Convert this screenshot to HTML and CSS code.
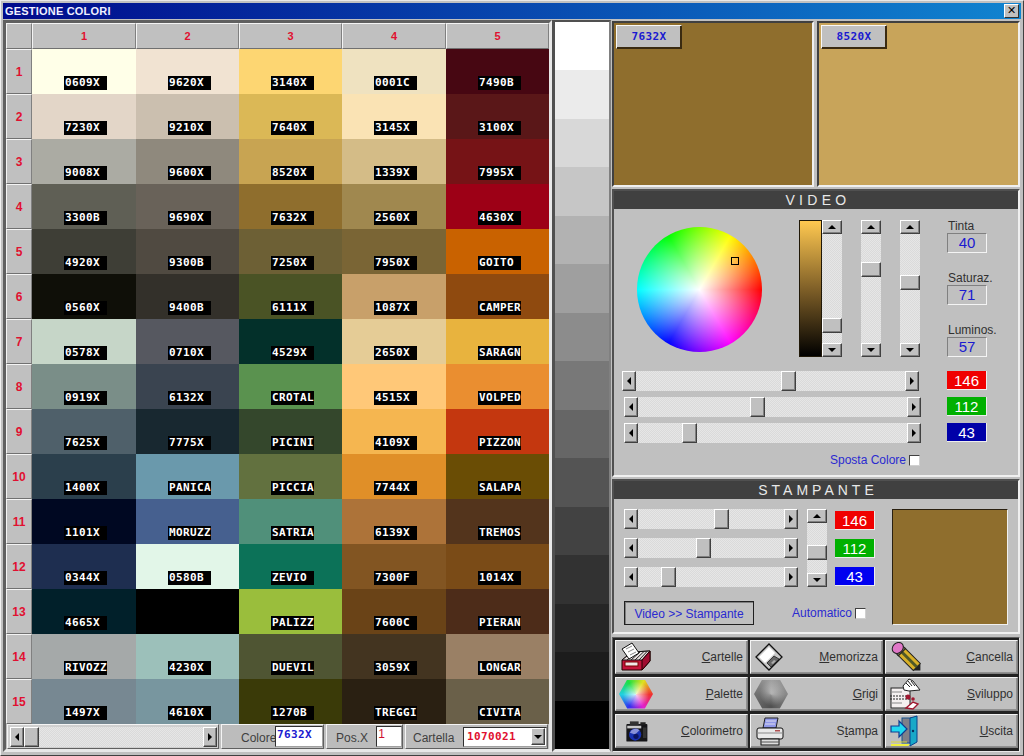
FILE: index.html
```html
<!DOCTYPE html>
<html lang="it">
<head>
<meta charset="utf-8">
<title>Gestione Colori</title>
<link rel="stylesheet" href="styles.css">
</head>
<body>
<div class="window">
  <div class="titlebar"><span class="title-text">GESTIONE COLORI</span><span class="close">✕</span></div>
  <div class="main">
    <section class="left">
      <div class="table">
        <div class="hd"></div><div class="hd">1</div><div class="hd">2</div><div class="hd">3</div><div class="hd">4</div><div class="hd">5</div>
        <div class="rh">1</div>
        <div class="cell" style="background:#FFFFE8"><b>0609X</b></div><div class="cell" style="background:#F1E3D2"><b>9620X</b></div><div class="cell" style="background:#FDD672"><b>3140X</b></div><div class="cell" style="background:#EFE2C0"><b>0001C</b></div><div class="cell" style="background:#470712"><b>7490B</b></div>
        <div class="rh">2</div>
        <div class="cell" style="background:#E3D6C8"><b>7230X</b></div><div class="cell" style="background:#CBBFAF"><b>9210X</b></div><div class="cell" style="background:#DBB856"><b>7640X</b></div><div class="cell" style="background:#FAE3B4"><b>3145X</b></div><div class="cell" style="background:#5A1718"><b>3100X</b></div>
        <div class="rh">3</div>
        <div class="cell" style="background:#ABABA3"><b>9008X</b></div><div class="cell" style="background:#8F897D"><b>9600X</b></div><div class="cell" style="background:#C8A452"><b>8520X</b></div><div class="cell" style="background:#D4BC87"><b>1339X</b></div><div class="cell" style="background:#761316"><b>7995X</b></div>
        <div class="rh">4</div>
        <div class="cell" style="background:#5F5F55"><b>3300B</b></div><div class="cell" style="background:#696259"><b>9690X</b></div><div class="cell" style="background:#8F6E2D"><b>7632X</b></div><div class="cell" style="background:#A0884F"><b>2560X</b></div><div class="cell" style="background:#9D0016"><b>4630X</b></div>
        <div class="rh">5</div>
        <div class="cell" style="background:#3E3E36"><b>4920X</b></div><div class="cell" style="background:#504A41"><b>9300B</b></div><div class="cell" style="background:#6D6035"><b>7250X</b></div><div class="cell" style="background:#7A6535"><b>7950X</b></div><div class="cell" style="background:#C96200"><b>GOITO</b></div>
        <div class="rh">6</div>
        <div class="cell" style="background:#0F0F08"><b>0560X</b></div><div class="cell" style="background:#33302A"><b>9400B</b></div><div class="cell" style="background:#4A5325"><b>6111X</b></div><div class="cell" style="background:#C8A06A"><b>1087X</b></div><div class="cell" style="background:#8F4A0F"><b>CAMPER</b></div>
        <div class="rh">7</div>
        <div class="cell" style="background:#C6D6C8"><b>0578X</b></div><div class="cell" style="background:#565860"><b>0710X</b></div><div class="cell" style="background:#03302A"><b>4529X</b></div><div class="cell" style="background:#E5CC96"><b>2650X</b></div><div class="cell" style="background:#E8B33E"><b>SARAGN</b></div>
        <div class="rh">8</div>
        <div class="cell" style="background:#7A8E88"><b>0919X</b></div><div class="cell" style="background:#3A4450"><b>6132X</b></div><div class="cell" style="background:#5A924F"><b>CROTAL</b></div><div class="cell" style="background:#FFC878"><b>4515X</b></div><div class="cell" style="background:#EA8E30"><b>VOLPED</b></div>
        <div class="rh">9</div>
        <div class="cell" style="background:#4F606A"><b>7625X</b></div><div class="cell" style="background:#182830"><b>7775X</b></div><div class="cell" style="background:#34472C"><b>PICINI</b></div><div class="cell" style="background:#F5B650"><b>4109X</b></div><div class="cell" style="background:#C4370F"><b>PIZZON</b></div>
        <div class="rh">10</div>
        <div class="cell" style="background:#2B3F4C"><b>1400X</b></div><div class="cell" style="background:#6A99AC"><b>PANICA</b></div><div class="cell" style="background:#62713F"><b>PICCIA</b></div><div class="cell" style="background:#E08F28"><b>7744X</b></div><div class="cell" style="background:#6A4D05"><b>SALAPA</b></div>
        <div class="rh">11</div>
        <div class="cell" style="background:#000822"><b>1101X</b></div><div class="cell" style="background:#46608F"><b>MORUZZ</b></div><div class="cell" style="background:#50907A"><b>SATRIA</b></div><div class="cell" style="background:#AD7339"><b>6139X</b></div><div class="cell" style="background:#53341C"><b>TREMOS</b></div>
        <div class="rh">12</div>
        <div class="cell" style="background:#1E2E50"><b>0344X</b></div><div class="cell" style="background:#E2F6E8"><b>0580B</b></div><div class="cell" style="background:#0C7258"><b>ZEVIO</b></div><div class="cell" style="background:#825522"><b>7300F</b></div><div class="cell" style="background:#7A4B17"><b>1014X</b></div>
        <div class="rh">13</div>
        <div class="cell" style="background:#01202A"><b>4665X</b></div><div class="cell" style="background:#000000"></div><div class="cell" style="background:#9ABE3C"><b>PALIZZ</b></div><div class="cell" style="background:#6A4317"><b>7600C</b></div><div class="cell" style="background:#4D2C19"><b>PIERAN</b></div>
        <div class="rh">14</div>
        <div class="cell" style="background:#A5A9A9"><b>RIVOZZ</b></div><div class="cell" style="background:#9CC0BA"><b>4230X</b></div><div class="cell" style="background:#4F5533"><b>DUEVIL</b></div><div class="cell" style="background:#433420"><b>3059X</b></div><div class="cell" style="background:#9A8065"><b>LONGAR</b></div>
        <div class="rh">15</div>
        <div class="cell" style="background:#778892"><b>1497X</b></div><div class="cell" style="background:#78969F"><b>4610X</b></div><div class="cell" style="background:#3A3A08"><b>1270B</b></div><div class="cell" style="background:#2A2012"><b>TREGGI</b></div><div class="cell" style="background:#6A6049"><b>CIVITA</b></div>
      </div>
      <div class="status">
        <div class="stat stat-scroll">
          <div class="hs hs-main"><span class="sb-btn"><i class="ar ar-l"></i></span><span class="track"><span class="thumb-h" style="left:0"></span></span><span class="sb-btn"><i class="ar ar-r"></i></span></div>
        </div>
        <div class="stat stat-colore"><span class="stat-label">Colore</span><span class="field field-blue">7632X</span></div>
        <div class="stat stat-pos"><span class="stat-label">Pos.X</span><span class="field field-pos">1</span></div>
        <div class="stat stat-cart"><span class="stat-label">Cartella</span><span class="combo"><span class="combo-val">1070021</span><span class="sb-btn combo-btn"><i class="ar ar-d"></i></span></span></div>
      </div>
    </section>

    <section class="strip">
      <div style="background:#ffffff"></div><div style="background:#ebebeb"></div><div style="background:#d8d8d8"></div><div style="background:#c6c6c6"></div><div style="background:#b2b2b2"></div><div style="background:#9f9f9f"></div><div style="background:#8c8c8c"></div><div style="background:#787878"></div><div style="background:#666666"></div><div style="background:#545454"></div><div style="background:#424242"></div><div style="background:#323232"></div><div style="background:#262626"></div><div style="background:#1c1c1c"></div><div style="background:#000000"></div>
    </section>

    <section class="right">
      <div class="swatches">
        <div class="swatch swatch-a"><span class="swatch-btn">7632X</span></div>
        <div class="swatch swatch-b"><span class="swatch-btn">8520X</span></div>
      </div>

      <div class="panel panel-video">
        <h2 class="panel-title">VIDEO</h2>
        <div class="video-top">
          <div class="wheel"><span class="marker"></span></div>
          <div class="ramp"></div>
          <div class="vs"><span class="sb-btn sb-v"><i class="ar ar-u"></i></span><span class="track-v"><span class="thumb-v" style="top:84px"></span></span><span class="sb-btn sb-v"><i class="ar ar-d"></i></span></div>
          <div class="vs vs-gap"><span class="sb-btn sb-v"><i class="ar ar-u"></i></span><span class="track-v"><span class="thumb-v" style="top:28px"></span></span><span class="sb-btn sb-v"><i class="ar ar-d"></i></span></div>
          <div class="vs vs-gap"><span class="sb-btn sb-v"><i class="ar ar-u"></i></span><span class="track-v"><span class="thumb-v" style="top:41px"></span></span><span class="sb-btn sb-v"><i class="ar ar-d"></i></span></div>
          <div class="hsl">
            <div class="hsl-item"><span class="hsl-label">Tinta</span><span class="hsl-val">40</span></div>
            <div class="hsl-item"><span class="hsl-label">Saturaz.</span><span class="hsl-val">71</span></div>
            <div class="hsl-item"><span class="hsl-label">Luminos.</span><span class="hsl-val">57</span></div>
          </div>
        </div>
        <div class="rgb-rows">
          <div class="rgb-row"><div class="hs hs-video hs-shift"><span class="sb-btn"><i class="ar ar-l"></i></span><span class="track"><span class="thumb-h" style="left:145px"></span></span><span class="sb-btn"><i class="ar ar-r"></i></span></div><span class="num num-r">146</span></div>
          <div class="rgb-row"><div class="hs hs-video"><span class="sb-btn"><i class="ar ar-l"></i></span><span class="track"><span class="thumb-h" style="left:112px"></span></span><span class="sb-btn"><i class="ar ar-r"></i></span></div><span class="num num-g">112</span></div>
          <div class="rgb-row"><div class="hs hs-video"><span class="sb-btn"><i class="ar ar-l"></i></span><span class="track"><span class="thumb-h" style="left:44px"></span></span><span class="sb-btn"><i class="ar ar-r"></i></span></div><span class="num num-b">43</span></div>
        </div>
        <div class="sposta"><span class="blue-label">Sposta Colore</span><span class="check"></span></div>
      </div>

      <div class="panel panel-print">
        <h2 class="panel-title">STAMPANTE</h2>
        <div class="print-body">
          <div class="print-controls">
            <div class="print-sliders">
              <div class="print-hs">
                <div class="hs hs-print"><span class="sb-btn"><i class="ar ar-l"></i></span><span class="track"><span class="thumb-h" style="left:76px"></span></span><span class="sb-btn"><i class="ar ar-r"></i></span></div>
                <div class="hs hs-print"><span class="sb-btn"><i class="ar ar-l"></i></span><span class="track"><span class="thumb-h" style="left:58px"></span></span><span class="sb-btn"><i class="ar ar-r"></i></span></div>
                <div class="hs hs-print"><span class="sb-btn"><i class="ar ar-l"></i></span><span class="track"><span class="thumb-h" style="left:23px"></span></span><span class="sb-btn"><i class="ar ar-r"></i></span></div>
              </div>
              <div class="vs vs-print"><span class="sb-btn sb-v"><i class="ar ar-u"></i></span><span class="track-v"><span class="thumb-v" style="top:22px"></span></span><span class="sb-btn sb-v"><i class="ar ar-d"></i></span></div>
              <div class="print-nums">
                <span class="num num-r">146</span>
                <span class="num num-g">112</span>
                <span class="num num-bb">43</span>
              </div>
            </div>
            <div class="print-actions">
              <span class="vs-btn">Video &gt;&gt; Stampante</span>
              <span class="auto"><span class="blue-label">Automatico</span><span class="check"></span></span>
            </div>
          </div>
          <div class="print-preview"></div>
        </div>
      </div>

      <div class="tools">
        <div class="tool">
          <svg class="ico" viewBox="0 0 32 32"><path d="M3 19 L13 11 L31 10 L31 20 L23 29 L3 29 Z" fill="#c4143c" stroke="#200" stroke-width="1"/><path d="M3 19 L23 19 L31 10 L13 11 Z" fill="#e8e0e0" stroke="#111" stroke-width="1"/><path d="M8 19 L17 11 M12 19 L21 11 M16 19 L25 10.500 M20 19 L28 10.500" stroke="#222" stroke-width="1"/><path d="M23 19 L31 10 L31 20 L23 29 Z" fill="#a00c30" stroke="#200"/><rect x="6" y="21" width="13" height="4" fill="#f0e8e8" stroke="#700"/><path d="M3 8 L13 2 L20 12 L10 18 Z" fill="#fff" stroke="#111"/><path d="M7 8 L13 5 M9 11 L15 8 M11 14 L17 11" stroke="#888"/></svg>
          <span class="tool-label"><u>C</u>artelle</span>
        </div>
        <div class="tool">
          <svg class="ico" viewBox="0 0 32 32"><path d="M2 16 L15 3 L28 16 L15 29 Z" fill="#c8c8c8" stroke="#111" stroke-width="1.3"/><path d="M5 16 L15 6 L21 12 L11 22 Z" fill="#fff"/><path d="M13 22 L20 15 L25 18 L17 26 Z" fill="#666" stroke="#222" stroke-width=".8"/><path d="M17 22 L20 19 L22 20 L19 23 Z" fill="#aaa"/></svg>
          <span class="tool-label"><u>M</u>emorizza</span>
        </div>
        <div class="tool">
          <svg class="ico ico-erase" viewBox="0 0 30 30"><g transform="translate(3 5) rotate(45 8 8)"><rect x="5" y="1" width="22" height="10" fill="#d8b028" stroke="#222"/><rect x="5" y="4.500" width="22" height="3" fill="#505828"/><rect x="1" y="1" width="5" height="10" fill="#787850" stroke="#222"/><ellipse cx="0" cy="6" rx="5" ry="6" fill="#e078c8" stroke="#222"/><path d="M27 1 L32 6 L27 11 Z" fill="#222"/></g></svg>
          <span class="tool-label"><u>C</u>ancella</span>
        </div>
        <div class="tool">
          <div class="hex hex-color"></div>
          <span class="tool-label"><u>P</u>alette</span>
        </div>
        <div class="tool">
          <div class="hex hex-grey"></div>
          <span class="tool-label"><u>G</u>rigi</span>
        </div>
        <div class="tool">
          <svg class="ico ico-dev" viewBox="0 0 32 32"><rect x="2" y="10" width="19" height="20" fill="#f4f0f0" stroke="#222"/><path d="M1 18 H22 M1 21 H22" stroke="#222" stroke-width="1" stroke-dasharray="2 1"/><circle cx="19" cy="19" r="2.500" fill="#a01830"/><circle cx="24" cy="21" r="1.800" fill="#a01830"/><path d="M14 8 L20 1 L24 3 L31 12 L20 13 L15 12 Z" fill="#fff" stroke="#222"/><path d="M17 5 L21 9 M19 3 L23 8 M22 3 L26 8" stroke="#222"/><path d="M17 30 L24 24 L29 26 L24 31 Z" fill="#fff" stroke="#a01830" stroke-width="1.400"/><path d="M3 14 H13 M3 25 H13" stroke="#888"/></svg>
          <span class="tool-label"><u>S</u>viluppo</span>
        </div>
        <div class="tool">
          <svg class="ico ico-cam" viewBox="0 0 32 32"><rect x="5" y="8" width="24" height="20" rx="1" fill="#151518"/><rect x="9" y="5" width="10" height="4" fill="#333"/><rect x="21" y="6" width="6" height="3" fill="#222"/><rect x="6" y="10" width="16" height="3" fill="#c8c8c8"/><circle cx="15" cy="20" r="7" fill="#1830b0"/><path d="M9 18 A7 7 0 0 1 20 15 L15 20 Z" fill="#8890d8"/><circle cx="16" cy="22" r="3" fill="#0c1460"/><rect x="24" y="12" width="4" height="12" fill="#333"/></svg>
          <span class="tool-label"><u>C</u>olorimetro</span>
        </div>
        <div class="tool">
          <svg class="ico" viewBox="0 0 32 32"><path d="M11 3 L24 3 L22 13 L9 13 Z" fill="#9098e8" stroke="#222"/><path d="M12 6 H22 M11 9 H21" stroke="#dde"/><rect x="3" y="13" width="26" height="11" rx="2" fill="#e8e8e8" stroke="#111"/><path d="M3 18 H29" stroke="#888"/><rect x="21" y="15" width="5" height="1.500" fill="#b05050"/><rect x="7" y="24" width="18" height="6" fill="#ddd" stroke="#111"/><path d="M7 27 H25" stroke="#555"/></svg>
          <span class="tool-label">S<u>t</u>ampa</span>
        </div>
        <div class="tool">
          <svg class="ico" viewBox="0 0 32 32"><rect x="13" y="3" width="11" height="25" fill="#808088" stroke="#14508c"/><path d="M21 3 L28 1 L28 27 L21 31 Z" fill="#18a8c8" stroke="#08408c" stroke-width="1"/><circle cx="24" cy="16" r="1.200" fill="#083060"/><path d="M2 11 H10 V6 L18 14 L10 22 V17 H2 Z" fill="#20d8f0" stroke="#103c90" stroke-width="1.200"/><path d="M2 29 H21 L19 31 H2 Z" fill="#f0f040"/><path d="M2 27 H18" stroke="#d8d840" stroke-width="1"/></svg>
          <span class="tool-label"><u>U</u>scita</span>
        </div>
      </div>
    </section>
  </div>
</div>
</body>
</html>
```

FILE: styles.css
```css
* { box-sizing: border-box; }
html, body { margin: 0; padding: 0; }
body {
  width: 1024px;
  height: 756px;
  overflow: hidden;
  background: #c0c0c0;
  font: 12px "Liberation Sans", Arial, sans-serif;
  color: #303030;
}
.window {
  width: 1024px;
  height: 756px;
  background: #c0c0c0;
  border-top: 1px solid #e8e8e8;
  border-left: 1px solid #f0f0f0;
  border-bottom: 1px solid #404040;
  border-right: 1px solid #404040;
  padding: 2px 2px 0 2px;
}
.titlebar {
  height: 16px;
  background: linear-gradient(90deg, #000a8c 0%, #1084d0 100%);
  display: flex;
  align-items: center;
  justify-content: space-between;
  padding: 0 0 0 2px;
}
.title-text {
  color: #f0f0ff;
  font: bold 11px "Liberation Sans", sans-serif;
  letter-spacing: 0.2px;
}
.close {
  width: 15px;
  height: 14px;
  margin-right: 2px;
  background: #c0c0c0;
  border: 1px solid;
  border-color: #fff #303030 #303030 #fff;
  color: #000;
  font: bold 11px/12px "DejaVu Sans", sans-serif;
  text-align: center;
}
.main { display: flex; margin-top: 1px; height: 732px; }

/* left table */
.left {
  width: 549px;
  height: 732px;
  border: 3px solid;
  border-color: #606060 #e8e8e8 #e8e8e8 #606060;
}
.table {
  display: grid;
  grid-template-columns: 26px 104px 103px 103px 104px 103px;
  grid-template-rows: 26px repeat(15, 45px);
}
.hd, .rh {
  background: #c0c0c0;
  border: 1px solid;
  border-color: #f4f4f4 #808080 #707070 #f4f4f4;
  color: #e01030;
  font: bold 11px "Liberation Sans", sans-serif;
  display: flex;
  align-items: center;
  justify-content: center;
}
.rh { font-size: 12px; }
.cell {
  display: flex;
  align-items: flex-end;
  padding: 0 0 4px 32px;
}
.cell b {
  display: block;
  width: 43px;
  height: 14px;
  padding-left: 1px;
  background: #000;
  color: #fff;
  font: bold 11px/14px "DejaVu Sans Mono", monospace;
  letter-spacing: 0.38px;
  white-space: nowrap;
  overflow: hidden;
}

/* status row */
.status { display: flex; gap: 2px; height: 26px; padding-right: 1px; }
.stat {
  height: 25px;
  border: 1px solid;
  border-color: #f4f4f4 #606060 #606060 #f4f4f4;
  background: #bcbcbc;
  display: flex;
  align-items: center;
}
.stat-scroll { width: 212px; margin-left: 1px; padding-left: 2px; background: #d0d0d0; }
.stat-colore { width: 103px; padding-left: 19px; }
.stat-pos { width: 77px; padding-left: 9px; }
.stat-cart { width: 143px; padding-left: 7px; }
.stat-label { font-size: 12px; color: #404040; white-space: nowrap; padding-top: 2px; }
.stat-colore .stat-label { width: 34px; }
.stat-pos .stat-label { width: 41px; }
.stat-cart .stat-label { width: 50px; }
.field {
  height: 21px;
  background: #fff;
  border: 1px solid;
  border-color: #303030 #a0a0a0 #a0a0a0 #303030;
}
.field-blue {
  width: 48px;
  color: #1a1ad0;
  font: bold 11px/16px "DejaVu Sans Mono", monospace;
  letter-spacing: 0.38px;
  padding-left: 1px;
}
.field-pos { width: 26px; color: #d01030; font-size: 12px; line-height: 15px; padding-left: 1px; }
.combo {
  width: 84px;
  height: 20px;
  background: #fff;
  border: 1px solid;
  border-color: #303030 #a0a0a0 #a0a0a0 #303030;
  display: flex;
  align-items: center;
  justify-content: space-between;
}
.combo-val {
  color: #e01030;
  font: bold 11px/16px "DejaVu Sans Mono", monospace;
  letter-spacing: 0.38px;
  padding-left: 3px;
}
.combo-btn { width: 15px; height: 17px; margin-right: 1px; }

/* scrollbars */
.hs { display: flex; height: 20px; }
.hs-main { width: 207px; }
.hs-video { width: 297px; }
.hs-shift { margin-left: -2px; margin-right: 2px; }
.hs-print { width: 174px; }
.sb-btn {
  flex: none;
  width: 14px;
  background: #c0c0c0;
  border: 1px solid;
  border-color: #fff #404040 #404040 #fff;
  box-shadow: inset -1px -1px 0 #808080;
  display: flex;
  align-items: center;
  justify-content: center;
}
.sb-v { width: 20px; height: 14px; }
.track, .track-v {
  position: relative;
  flex: 1;
  background: repeating-conic-gradient(#e6e6e6 0 25%, #dadada 0 50%) 0 0 / 2px 2px;
}
.thumb-h, .thumb-v {
  position: absolute;
  background: #c0c0c0;
  border: 1px solid;
  border-color: #fff #404040 #404040 #fff;
  box-shadow: inset -1px -1px 0 #808080;
}
.thumb-h { top: 0; width: 15px; height: 20px; }
.thumb-v { left: 0; width: 20px; height: 15px; }
.ar { display: block; width: 0; height: 0; border-style: solid; border-color: transparent; }
.ar-l { border-width: 4px 4px 4px 0; border-right-color: #000; }
.ar-r { border-width: 4px 0 4px 4px; border-left-color: #000; }
.ar-u { border-width: 0 4px 4px 4px; border-bottom-color: #000; }
.ar-d { border-width: 4px 4px 0 4px; border-top-color: #000; }

/* grey strip */
.strip {
  width: 59px;
  height: 732px;
  border-style: solid;
  border-width: 2px 2px 3px 3px;
  border-color: #505050 #808080 #e8e8e8 #505050;
  display: grid;
  grid-template-rows: repeat(15, 1fr);
}

/* right */
.right { width: 408px; margin-left: 1px; display: flex; flex-direction: column; }
.swatches { display: flex; gap: 3px; height: 166px; margin-top: 1px; }
.swatch {
  height: 166px;
  border: 2px solid;
  border-color: #404040 #f0f0f0 #f0f0f0 #404040;
  padding: 2px;
}
.swatch-a { width: 202px; background: #8F6E2D; }
.swatch-b { width: 203px; background: #C8A45A; }
.swatch-btn {
  display: block;
  width: 66px;
  height: 24px;
  background: #c0c0c0;
  border: 1px solid;
  border-color: #f8f8f8 #3a2a10 #3a2a10 #f8f8f8;
  box-shadow: inset -1px -1px 0 #3a2a10;
  color: #1a1ad0;
  font: bold 11px/21px "DejaVu Sans Mono", monospace;
  letter-spacing: 0.38px;
  text-align: center;
}
.panel {
  margin-top: 2px;
  border: 2px solid;
  border-color: #505050 #f0f0f0 #f0f0f0 #505050;
}
.panel-video { height: 288px; }
.panel-print { height: 155px; }
.panel-title {
  margin: 0;
  height: 18px;
  background: #404040;
  color: #e8e8e8;
  font: normal 14px/18px "Liberation Sans", sans-serif;
  letter-spacing: 4px;
  text-indent: 4px;
  text-align: center;
}
.panel-video .panel-title { letter-spacing: 4.3px; }
.video-top { display: flex; height: 137px; margin-top: 11px; }
.wheel {
  position: relative;
  flex: none;
  width: 125px;
  height: 125px;
  margin: 7px 0 0 23px;
  border-radius: 50%;
  background:
    radial-gradient(circle closest-side, #fff 0%, rgba(255,255,255,0) 100%),
    conic-gradient(from 90deg, #f00, #f0f, #00f, #0ff, #0f0, #ff0, #f00);
}
.marker {
  position: absolute;
  left: 94px;
  top: 30px;
  width: 8px;
  height: 8px;
  border: 1px solid #000;
}
.ramp {
  flex: none;
  width: 23px;
  height: 137px;
  margin-left: 37px;
  border: 1px solid #201808;
  background: linear-gradient(#ffc850 0%, #806028 50%, #000 100%);
}
.vs { flex: none; width: 20px; height: 137px; display: flex; flex-direction: column; }
.vs-gap { margin-left: 19px; }
.hsl { flex: none; width: 40px; margin-left: 27px; height: 137px; display: flex; flex-direction: column; justify-content: space-between; }
.hsl-item { height: 33px; display: flex; flex-direction: column; }
.hsl-label { height: 13px; line-height: 13px; color: #303030; white-space: nowrap; padding-left: 1px; }
.hsl-val {
  width: 40px;
  height: 20px;
  border: 1px solid;
  border-color: #808080 #f4f4f4 #f4f4f4 #808080;
  color: #1a1ad0;
  font-size: 15px;
  line-height: 18px;
  text-align: center;
}
.rgb-rows { display: flex; flex-direction: column; gap: 6px; margin-top: 14px; }
.rgb-row { display: flex; align-items: flex-start; padding-left: 10px; gap: 26px; }
.num {
  flex: none;
  width: 40px;
  height: 19px;
  color: #fff;
  font-size: 15px;
  line-height: 19px;
  text-align: center;
  border-right: 1px solid #eee;
  border-bottom: 1px solid #eee;
}
.num-r { background: #f00000; }
.num-g { background: #00b000; }
.num-b { background: #0000a8; }
.num-bb { background: #0000f0; }
.sposta { display: flex; align-items: center; justify-content: flex-end; width: 306px; height: 14px; margin-top: 10px; gap: 3px; }
.blue-label { color: #2a2ad0; font-size: 12px; white-space: nowrap; }
.check {
  display: block;
  flex: none;
  width: 11px;
  height: 11px;
  background: #fff;
  border: 1px solid;
  border-color: #404040 #d0d0d0 #d0d0d0 #404040;
}

/* stampante */
.print-body { display: flex; padding: 10px 0 0 10px; }
.print-controls { width: 268px; flex: none; }
.print-sliders { display: flex; height: 78px; }
.print-hs { display: flex; flex-direction: column; justify-content: space-between; width: 174px; flex: none; }
.vs-print { height: 78px; margin-left: 9px; }
.print-nums { display: flex; flex-direction: column; flex: none; width: 40px; margin: 2px 0 0 8px; gap: 9px; }
.print-nums .num { height: 19px; }
.print-actions { display: flex; align-items: center; height: 24px; margin-top: 14px; }
.vs-btn {
  flex: none;
  width: 130px;
  height: 24px;
  background: #c0c0c0;
  border: 1px solid #202020;
  box-shadow: inset 1px 1px 0 #808080;
  color: #2a2ad0;
  line-height: 24px;
  text-align: center;
}
.auto { display: flex; align-items: center; gap: 3px; margin-left: 38px; }
.print-preview {
  flex: none;
  width: 116px;
  height: 116px;
  background: #8F6E2D;
  border: 1px solid #2a2010;
  border-right-color: #f0f0f0;
  border-bottom-color: #f0f0f0;
}

/* tools */
.tools {
  margin-top: 3px;
  height: 115px;
  background: #222;
  border: 1px solid;
  border-color: #606060 #e8e8e8 #e8e8e8 #606060;
  padding: 2px 1px 3px 2px;
  display: grid;
  grid-template-columns: 133px 133px 133px;
  grid-auto-rows: 34px;
  column-gap: 2px;
  row-gap: 3px;
}
.tool {
  background: #c0c0c0;
  border: 1px solid;
  border-color: #f4f4f4 #808080 #808080 #f4f4f4;
  box-shadow: inset -1px -1px 0 #909090;
  display: flex;
  align-items: center;
  justify-content: space-between;
  padding: 0 4px 0 3px;
  font-size: 12px;
  color: #303030;
}
.tool-label { white-space: nowrap; }
.ico { flex: none; width: 32px; height: 32px; }
.ico-erase { margin-left: 2px; width: 30px; height: 30px; }
.ico-cam { margin-left: 3px; width: 28px; height: 28px; }
.hex {
  flex: none;
  width: 34px;
  height: 29px;
  clip-path: polygon(0 50%, 24% 0, 76% 0, 100% 50%, 76% 100%, 24% 100%);
}
.hex-color {
  background:
    radial-gradient(circle closest-side, rgba(255,255,255,.8) 0%, rgba(255,255,255,0) 90%),
    conic-gradient(from 90deg, #f03030, #e020d0, #3030f0, #20d0e0, #20e040, #e0e020, #f03030);
}
.hex-grey {
  background:
    radial-gradient(circle closest-side at 55% 45%, rgba(200,200,200,.6) 0%, rgba(200,200,200,0) 100%),
    conic-gradient(#a0a0a0, #888888 25%, #505050 50%, #707070 75%, #a0a0a0);
}
```
